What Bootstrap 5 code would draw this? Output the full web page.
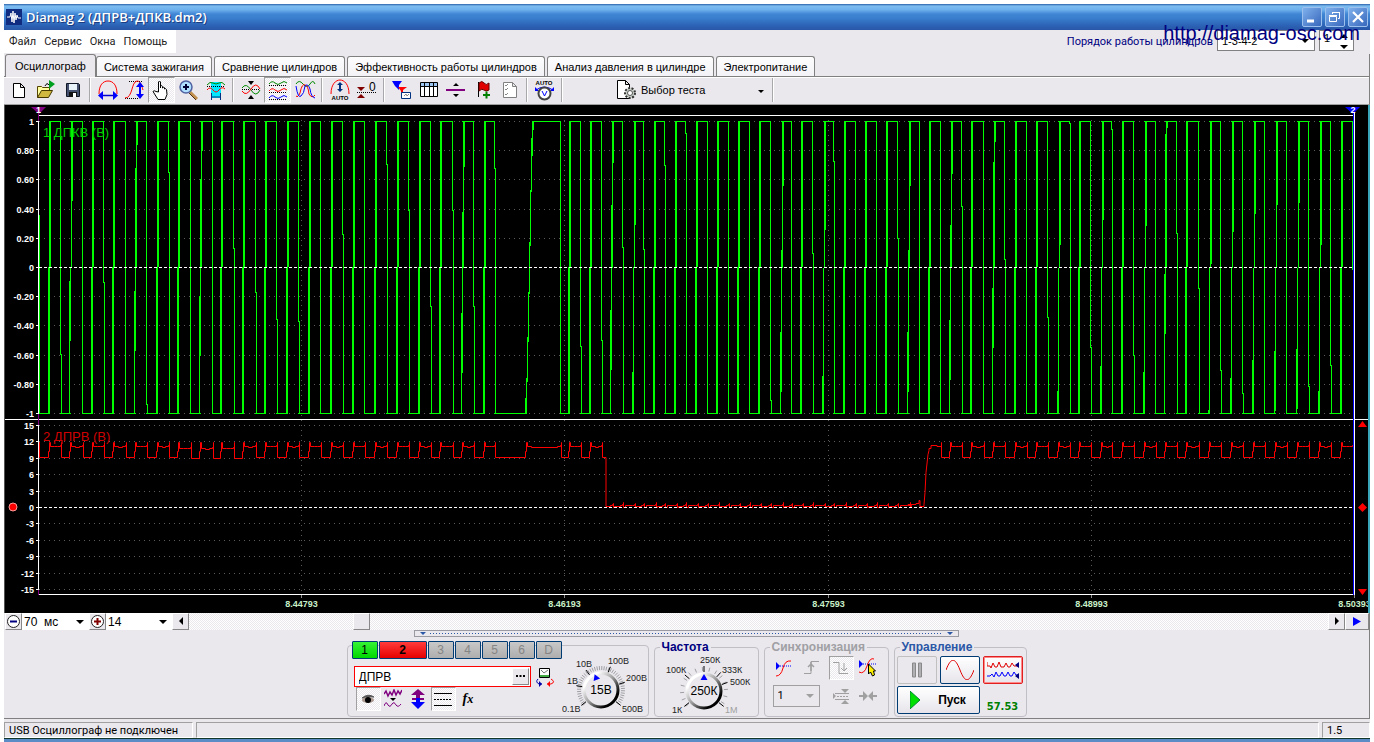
<!DOCTYPE html>
<html lang="ru">
<head>
<meta charset="utf-8">
<meta name="viewport" content="width=device-width, initial-scale=1">
<title>Diamag 2 (ДПРВ+ДПКВ.dm2)</title>
<link rel="stylesheet" href="https://cdn.jsdelivr.net/npm/bootstrap@5.3.0/dist/css/bootstrap.min.css">
<style>
:root{--face:#eae8ed;--dither:repeating-conic-gradient(#fff 0 25%,#eae8ed 0 50%) 0 0/2px 2px}
body{background:#fff;color:#000;font:11px/14px "Liberation Sans",Arial,sans-serif;padding:4px 4px 0}
.tahoma{font-family:Roboto,Tahoma,sans-serif}
svg{display:block}
.app{background:var(--face);min-height:calc(100vh - 4px);border-bottom:3px solid #5b8cc5}
.title-bar{height:26px;background:linear-gradient(#2a60a8 0,#7cbcf0 2px,#6db0ec 6px,#3f86d4 10px,#3a7fcf 14px,#2b61b4 22px,#2a57a6);padding:0 2px 0 2px}
.title-bar h1{font:600 13px/18px "Open Sans","Noto Sans",sans-serif;color:#fff;margin:0;text-shadow:1px 1px #1c3c80}
.win-btn{width:20px;height:20px;padding:0;border:1px solid #9cc0ee;border-radius:2px;background:linear-gradient(135deg,#7fb0ec,#3868bc)}
.menu-row{height:24px}
.menu-list{background:#fff;height:23px;padding:0 9px 0 5px;gap:8px}
.menu-list a{color:#222;text-decoration:none}
.order-label{color:#000080}
.field{position:relative;background:#fff}
.field select,.field input{appearance:none;border:0;background:transparent;width:100%;height:100%;padding:0 4px;font:inherit;color:#000;outline:0}
.field .arrow{position:absolute;right:5px;top:50%;margin-top:-2px;border:4px solid transparent;border-top-color:#000;border-bottom:0;pointer-events:none}
.field.framed{border:1px solid #808080;height:21px}
.order-field{width:98px}.count-field{width:35px}
.order-field input,.count-field input{padding-bottom:10px}
.field .up{border-top:0;border-bottom:4px solid #000;margin-top:-7px}
.field .down{margin-top:4px}
.site-link{position:absolute;right:10px;top:17px;font-size:20px;line-height:24px;color:#000080;text-decoration:none;z-index:3}
.tab-row{padding-left:1px;gap:2px;border-bottom:1px solid #808080;border-right:1px solid #808080;height:23px}
.tab-row button{border:1px solid #808080;border-bottom:0;border-radius:3px 3px 0 0;background:linear-gradient(#fdfdfe,#f3f2f6);height:20px;padding:0 7px;font-size:11px;line-height:18px;white-space:nowrap;text-align:center}
.tab-row button.current{height:23px;margin-bottom:-1px;margin-right:-2px;background:var(--face);padding:0 9px;line-height:20px;z-index:1}
.tool-row{height:28px;padding:0 0 1px 1px;border-right:1px solid #808080;border-bottom:1px solid #a0a0a0;box-shadow:inset 0 1px #fff}
.tool{width:27px;height:26px;border:0;background:none;padding:0;display:flex;align-items:center;justify-content:center}
.pressed{background:var(--dither);border:1px solid #fff;border-top-color:#a0a0a0;border-left-color:#a0a0a0}
.divider{width:2px;height:24px;margin:0 3px;background:#a8a8ac;border-right:1px solid #fff}
.test-pick{width:203px;padding-left:49px;position:relative;gap:4px}
.test-pick select{appearance:none;border:0;background:transparent;font:inherit;padding:0;flex:1;outline:0}
.test-pick .arrow{position:absolute;right:5px;top:50%;border:3px solid transparent;border-top-color:#000;border-bottom:0;pointer-events:none}
.scope{background:#000;border-left:1px solid #555;border-right:2px solid #38a6b8}
.scope svg{width:100%;height:508px;overflow:hidden}
.scroll-row{height:17px;padding-left:1px;border-right:1px solid #808080}
.raised{border:1px solid;border-color:#fff #888 #888 #fff;background:var(--face);padding:0;display:flex;align-items:center;justify-content:center;width:17px;height:17px}
.scroll-row .field{font-size:12px;height:17px}
.scroll-row select{padding:0 2px}
.ms-field{width:67px}.len-field{width:66px}
.track{appearance:none;flex:1;min-width:0;height:17px;margin:0;background:var(--dither)}
.track::-webkit-slider-thumb{appearance:none;width:17px;height:17px;background:var(--face);border:1px solid;border-color:#fff #888 #888 #fff}
.splitter{width:545px;height:7px;border:1px solid #9a9aa2;margin:0 auto;padding:0 5px}
.splitter i{border:3px solid transparent;border-top-color:#2a57a6;border-bottom:0}
.splitter span{flex:1;height:1px;margin:0 4px;background:repeating-linear-gradient(90deg,#2a57a6 0 1px,transparent 1px 3px)}
.panel{border-right:1px solid #808080;border-bottom:1px solid #808080;padding-bottom:1px}
.groups{gap:5px;padding-top:3px}
.box{border:1px solid #c0bfc6;border-radius:4px}
.channel-box{width:302px;height:72px;margin-top:5px}
fieldset.box{height:76px;margin-top:1px;padding:0 2px;min-width:0}
legend{float:none;width:auto;margin:0 0 0 3px;padding:0 2px;font-size:12px;line-height:13px;font-weight:bold}
.channels{margin:-5px 0 0 4px;gap:1px}
.channels button{width:26px;height:18px;border:1px solid #003c74;border-radius:1px;background:linear-gradient(#c8c8c8,#aeaeae);color:#858585;padding:0;font-size:12px;line-height:14px}
.channels .one{background:linear-gradient(#36f336,#00d800);color:#000}
.channels .two{width:48px;background:linear-gradient(#ff3b3b,#e60000);color:#000;font-weight:bold}
.name-row{margin-top:7px;padding-left:6px;gap:4px}
.name-field{border:1px solid #f00;background:#fff;width:177px;height:21px;padding:1px}
.name-field input{border:0;flex:1;min-width:0;padding:0 3px;font-size:12px;outline:0}
.mini{width:25px;height:24px;border:0;background:none;padding:0;display:flex;align-items:center;justify-content:center}
.mini.pressed{border:1px solid #fff;border-top-color:#a0a0a0;border-left-color:#a0a0a0;background:var(--dither)}
.fx{font:italic bold 14px/16px "Liberation Serif",serif}
.freq-box{width:105px}.sync-box{width:125px}.ctl-box{width:133px}
.sync-grid{display:grid;grid-template-columns:25px 29px 29px 25px;justify-items:center;align-items:center;padding:2px 0 0 6px;row-gap:4px}
.sync-grid .field{grid-column:1/3;width:47px;height:22px;border:1px solid #a0a0a0;background:var(--face);justify-self:start}
.ctl-grid{display:grid;grid-template-columns:40px 40px 40px;gap:2px 3px;padding-top:2px}
.push{height:28px;padding:0;border:1px solid #003c74;border-radius:2px;background:linear-gradient(#fff,#e6e4ea);display:flex;align-items:center;justify-content:center}
.push.off{border-color:#c0c0c0;background:#eae8ed}
.push.on{border:1px solid #e02020;box-shadow:inset 0 0 0 1px #f88}
.push.start{grid-column:1/3;font:bold 12px/14px "Liberation Sans",sans-serif;gap:18px}
.rate{font:bold 11px/14px "DejaVu Sans Condensed",sans-serif;color:#008000;align-self:end;text-align:center}
.status-row{height:20px;padding-top:3px;gap:3px;border-bottom:1px solid #12352c;margin-top:auto}
.status-row div{border:1px solid #a0a0a0;border-right-color:#fff;border-bottom-color:#fff;padding:0 4px;height:16px;line-height:15px}
.conn{width:189px;white-space:nowrap}.ver{width:48px}
</style>
</head>
<body>
<div class="app d-flex flex-column position-relative">
  <header class="title-bar d-flex align-items-center justify-content-between">
    <div class="d-flex align-items-center gap-1">
      <svg width="16" height="16"><rect width="16" height="16" fill="#102c80"/><path d="M1 8h3l1-4 1 9 1-11 1 12 1-10 1 7 1-5 1 3h3" fill="none" stroke="#fff"/></svg>
      <h1>Diamag 2 (ДПРВ+ДПКВ.dm2)</h1>
    </div>
    <div class="d-flex" style="gap:3px">
      <button class="win-btn" aria-label="Свернуть"><svg width="18" height="18"><path d="M4 13h7" stroke="#fff" stroke-width="3"/></svg></button>
      <button class="win-btn" aria-label="Восстановить"><svg width="18" height="18" fill="none" stroke="#fff"><path d="M6.500 6V4.500h7v6H12M6 4.500h8M3.500 8.500h7v5h-7zM3 7.500h8"/></svg></button>
      <button class="win-btn" aria-label="Закрыть"><svg width="18" height="18"><path d="M4 4l10 10M14 4L4 14" stroke="#fff" stroke-width="2.200"/></svg></button>
    </div>
  </header>
  <a class="site-link" href="http://diamag-osc.com">http://diamag-osc.com</a>

  <div class="menu-row d-flex justify-content-between">
    <nav class="menu-list tahoma d-flex align-items-center"><a href="#">Файл</a><a href="#">Сервис</a><a href="#">Окна</a><a href="#">Помощь</a></nav>
    <div class="d-flex align-items-center pe-3">
      <label class="order-label me-1 tahoma" for="order">Порядок работы цилиндров</label>
      <div class="field framed order-field align-self-start"><select id="order"><option>1-3-4-2</option></select><span class="arrow"></span></div>
      <div class="field framed count-field ms-1 align-self-start"><input id="cyl" type="text" value="1" aria-label="Цилиндр"><span class="arrow up"></span><span class="arrow down"></span></div>
    </div>
  </div>

  <div class="tab-row d-flex align-items-end" role="tablist">
    <button class="current" role="tab">Осциллограф</button><button role="tab">Система зажигания</button><button role="tab">Сравнение цилиндров</button><button role="tab">Эффективность работы цилиндров</button><button role="tab">Анализ давления в цилиндре</button><button role="tab">Электропитание</button>
  </div>

  <div class="tool-row d-flex align-items-center">
    <button class="tool" aria-label="Новый"><svg width="24" height="22"><path d="M6.500 4.500h7l4 4v10h-11zM13.500 4.500v4h4" fill="#fff" stroke="#000"/></svg></button>
    <button class="tool" aria-label="Открыть"><svg width="24" height="22"><path d="M3.500 18.500v-11h4l1 1h7v3" fill="#ffffa0" stroke="#554400"/><path d="M3.500 18.500l4-7h11l-4 7z" fill="#d0b840" stroke="#443800"/><path d="M11 7q2-4 4-1" fill="none" stroke="#000"/><path d="M15 1l6 4-6 5z" fill="#00a020"/></svg></button>
    <button class="tool" aria-label="Сохранить"><svg width="24" height="22"><path d="M5.500 4.500h12l1 1v12h-13z" fill="#44506e" stroke="#101828"/><path d="M8 5h8v6H8z" fill="#e8f4fa"/><path d="M8 13h8v5H8z" fill="#111"/><path d="M12 14h3v4h-3z" fill="#fff"/></svg></button>
    <span class="divider"></span>
    <button class="tool" aria-label="Период"><svg width="24" height="22" fill="none"><path d="M3 15C3 6 7 2 12 2s9 4 9 13" stroke="#f00"/><path d="M4 16.500h16" stroke="#00c" stroke-width="1.500"/><path d="M7 12l-5 4.500L7 21zM17 12l5 4.500L17 21z" fill="#00f"/></svg></button>
    <button class="tool" aria-label="Амплитуда"><svg width="24" height="22" fill="none"><path d="M6 2.500h14M2 19.500h13" stroke="#000" stroke-dasharray="1 1"/><path d="M2 19c8 0 6-16 12-17 4 0 5 6 6 9" stroke="#f00"/><path d="M17 5v13" stroke="#00f" stroke-width="2"/><path d="M13 8l4-5 4 5zM13 15l4 5 4-5z" fill="#00f"/></svg></button>
    <button class="tool pressed" aria-label="Рука"><svg width="24" height="22"><path d="M8.500 13V3q1-2 2 0v6V7q1.500-1 2 .5V9q1.500-2 2 0v1q1.500-1 2 .5l.5 5-2 5h-7l-5-8q1-1.500 3 0z" fill="#fff" stroke="#000"/></svg></button>
    <button class="tool" aria-label="Лупа"><svg width="24" height="22"><path d="M13 13l7 7" stroke="#c09050" stroke-width="3"/><path d="M12 14l7 7" stroke="#503010"/><circle cx="9" cy="8" r="6" fill="#b0e0ff" stroke="#5060a0" stroke-width="1.500"/><path d="M6 8h6M9 5v6" stroke="#003" stroke-width="2"/></svg></button>
    <button class="tool" aria-label="Выделение"><svg width="24" height="22" fill="none"><path d="M7 3h10v16H7z" fill="#00e8ff"/><path d="M3 6q3-4 6-2t6 0 6 2" stroke="#080"/><path d="M3 7.500h18" stroke="#000" stroke-dasharray="1 1"/><path d="M3 11q3-4 6 0t6 0 6-1" stroke="#f00"/><path d="M7.500 14v7M16.500 14v7M8 18h8" stroke="#003080"/></svg></button>
    <span class="divider"></span>
    <button class="tool" aria-label="Совместить"><svg width="24" height="22" fill="none"><path d="M12 6L9 2h6zM12 16l-3 4h6z" fill="#000"/><path d="M3 10.500h18" stroke="#000" stroke-dasharray="1 1"/><path d="M3 9q4-6 9 2t9 0" stroke="#080"/><path d="M3 12q4 6 9-2t9 0" stroke="#f00"/></svg></button>
    <button class="tool pressed" aria-label="Раздельно"><svg width="24" height="22" fill="none"><path d="M3 5q3-4 6-1t6 0 6 0" stroke="#080"/><path d="M3 6.500h18M3 13.500h18M3 20.500h18" stroke="#000" stroke-dasharray="1 1"/><path d="M3 12q3-4 6-1t6 0 6 0" stroke="#f00"/><path d="M3 19q3-4 6-1t6 0 6 0" stroke="#00f"/></svg></button>
    <button class="tool" aria-label="Наложить"><svg width="24" height="22" fill="none"><path d="M3 5q3-5 7 0t7 0 5 0" stroke="#080"/><path d="M3 17q2 2 4-3 2-10 5-8 3 0 4 9 3 5 6 1" stroke="#f00"/><path d="M3 7q2 13 5 10 3-2 4-10 3-3 5 3 1 8 5 9" stroke="#00f"/></svg></button>
    <span class="divider"></span>
    <button class="tool" aria-label="Авто"><svg width="24" height="22"><path d="M3 15C3 5 8 1 12 1s9 4 9 14" fill="none" stroke="#f00"/><path d="M12 4v8" stroke="#003080" stroke-width="2"/><path d="M9 6l3-3 3 3zM9 10l3 3 3-3z" fill="#003080"/><text x="12" y="21" font-size="6" font-weight="bold" text-anchor="middle">AUTO</text></svg></button>
    <button class="tool" aria-label="Ноль"><svg width="24" height="22"><path d="M2 8h8l-4 4zM2 19h8l-4-4z" fill="#800000"/><path d="M2 13.500h19" stroke="#000" stroke-dasharray="1 1"/><text x="14" y="12" font-size="12">0</text></svg></button>
    <span class="divider"></span>
    <button class="tool" aria-label="Фильтр"><svg width="24" height="22"><path d="M2 2h10L9 6v5L5 7z" fill="#00f"/><path d="M8 8h9l-4 3v5h-2v-4z" fill="#f00"/><path d="M11.500 13.500h9v6h-9z" fill="#fff" stroke="#003080"/><path d="M14 17l2-2 1 2 2-2" stroke="#888" fill="none"/></svg></button>
    <button class="tool" aria-label="Таблица"><svg width="24" height="22"><path d="M3.500 3.500h17v14h-17z" fill="#fff" stroke="#000"/><path d="M4 4h16v3H4z" fill="#9cc4f0"/><path d="M3 7.500h18M7.500 4v13M12.500 4v13M16.500 4v13" stroke="#000" fill="none"/></svg></button>
    <button class="tool" aria-label="Разделить"><svg width="24" height="22"><path d="M2 11h19" stroke="#800080" stroke-width="2"/><path d="M9 7l3-3 3 3zM9 15l3 3 3-3z"/></svg></button>
    <button class="tool" aria-label="Метка"><svg width="24" height="22"><path d="M7.500 3v15" stroke="#000"/><path d="M8 4q3-3 5 0t5 0v7q-3 2-5 0t-5 1z" fill="#e00000" stroke="#600"/><path d="M12 16h7M15.500 12.500v7" stroke="#008000" stroke-width="2"/></svg></button>
    <button class="tool" aria-label="Отчёт"><svg width="24" height="22" fill="none"><path d="M5.500 3.500h9l4 4v11h-13zM14.500 3.500v4h4" fill="#fff" stroke="#808080"/><path d="M7 6l1 1 2-2M7 10l1 1 2-2M7 15l1 1 2-2" stroke="#888"/></svg></button>
    <span class="divider"></span>
    <button class="tool" aria-label="Автовольтметр"><svg width="24" height="22"><text x="11" y="6" font-size="6" font-weight="bold" text-anchor="middle">AUTO</text><path d="M3 11q8-6 17 0" fill="none" stroke="#00f"/><path d="M2 8v4h4zM21 8v4h-4z" fill="#00f"/><circle cx="11.500" cy="14.500" r="6" fill="#fff" stroke="#444" stroke-width="2"/><path d="M9 12l2.500 5 2.500-5" fill="none" stroke="#00f"/></svg></button>
    <span class="divider"></span>
    <div class="test-pick d-flex align-items-center">
      <svg width="22" height="22"><path d="M2.500 1.500h8l4 4v14h-12zM10.500 1.500v4h4" fill="#fff" stroke="#000"/><circle cx="15" cy="14" r="5" fill="#c8d0c8" stroke="#333" stroke-width="2" stroke-dasharray="2 1.500"/><circle cx="15" cy="14" r="2.500" fill="#fff" stroke="#555"/></svg>
      <select aria-label="Выбор теста"><option>Выбор теста</option></select><span class="arrow"></span>
    </div>
    <span class="divider"></span>
  </div>

  <main class="scope"><svg id="scope" font-family="Liberation Sans,Arial,sans-serif"></svg></main>

  <div class="scroll-row d-flex">
    <button class="raised" aria-label="Меньше"><svg width="15" height="15"><circle cx="7.500" cy="7.500" r="6" fill="#fff" stroke="#222"/><path d="M4 7.500h7" stroke="#000080" stroke-width="2"/></svg></button>
    <div class="field ms-field"><select aria-label="Развёртка"><option>70 &nbsp;мс</option></select><span class="arrow"></span></div>
    <button class="raised" aria-label="Больше"><svg width="15" height="15"><circle cx="7.500" cy="7.500" r="6" fill="#fff" stroke="#222"/><path d="M4 7.500h7M7.500 4v7" stroke="#800000" stroke-width="2"/></svg></button>
    <div class="field len-field"><select aria-label="Масштаб"><option>14</option></select><span class="arrow"></span></div>
    <button class="raised" aria-label="Влево"><svg width="8" height="9"><path d="M6 0v8L2 4z"/></svg></button>
    <input class="track" type="range" min="0" max="1000" value="146" aria-label="Прокрутка">
    <button class="raised" aria-label="Вправо"><svg width="8" height="9"><path d="M2 0v8l4-4z"/></svg></button>
    <button class="raised" style="width:24px" aria-label="Воспроизвести"><svg width="10" height="9"><path d="M1 0v9l8-4.500z" fill="#00f"/></svg></button>
  </div>

  <section class="panel flex-grow-1">
    <div class="splitter d-flex align-items-center"><i></i><span></span><i></i></div>
    <div class="groups d-flex justify-content-center align-items-start">
      <div class="box channel-box d-flex">
        <div>
          <div class="channels d-flex"><button class="one">1</button><button class="two">2</button><button>3</button><button>4</button><button>5</button><button>6</button><button>D</button></div>
          <div class="name-row d-flex align-items-center">
            <div class="name-field d-flex"><input type="text" value="ДПРВ" aria-label="Имя канала"><button class="raised" aria-label="Выбрать"><svg width="9" height="3"><path d="M0 1h2M3.500 1h2M7 1h2" stroke="#000" stroke-width="2"/></svg></button></div>
            <svg width="20" height="20" fill="none"><path d="M4.500 1.500h10v9h-10z" fill="#fff" stroke="#000"/><path d="M5 8h9v2H5z" fill="#4a4"/><path d="M6 3l3 3 4-3" stroke="#777"/><path d="M3 12q-3 3 1 5h3" stroke="#00a"/><path d="M16 12q5 3 0 5h-4" stroke="#f00"/><path d="M4 14l3 3-3 3z" fill="#00a"/><path d="M15 14l-3 3 3 3z" fill="#f00"/></svg>
          </div>
          <div class="d-flex ps-2">
            <button class="mini pressed" aria-label="Показать"><svg width="16" height="12"><path d="M2 5q6-5 12-1-4-1-12 1z" fill="#555" stroke="#555"/><ellipse cx="8" cy="7" rx="6" ry="3" fill="#a89890"/><circle cx="8" cy="7" r="3"/></svg></button>
            <button class="mini" aria-label="Сглаживание"><svg width="18" height="20" fill="none" stroke="#800080"><path d="M0 5l2-3 2 5 2-4 2 3 2-5 2 5 2-4 2 3 2-4" stroke-width="1.500"/><path d="M0 17q2-6 4-1 2 3 4-1 2-3 4 1 2 3 5-1"/><path d="M6 9h6l-3 3z" fill="#000" stroke="none"/></svg></button>
            <button class="mini" aria-label="Сдвиг"><svg width="16" height="20"><path d="M8 0l7 6h-5v3h4v2H2V9h4V6H1z" fill="#800080"/><path d="M8 20l7-7h-5v-4H6v4H1z" fill="#00f"/></svg></button>
            <button class="mini pressed" aria-label="Линии"><svg width="18" height="16"><path d="M0 2.500h18M0 14.500h18" stroke="#000"/><path d="M0 8.500h18" stroke="#000" stroke-dasharray="2 1"/></svg></button>
            <button class="mini fx" aria-label="Функция">f<small>x</small></button>
          </div>
        </div>
        <svg id="volts" class="flex-shrink-0" width="88" height="70" font-family="Liberation Sans,Arial,sans-serif"></svg>
      </div>
      <fieldset class="box freq-box"><legend style="color:#000080">Частота</legend><svg id="freq" width="98" height="62" font-family="Liberation Sans,Arial,sans-serif"></svg></fieldset>
      <fieldset class="box sync-box"><legend style="color:#a0a0a4">Синхронизация</legend>
        <div class="sync-grid">
          <button class="mini" aria-label="Уровень"><svg width="20" height="18"><path d="M1 7h16" stroke="#00f" stroke-dasharray="1 1"/><path d="M1 17q5 0 7-8t8-7" fill="none" stroke="#f00"/><path d="M1 3v8l4-4z" fill="#00f"/></svg></button>
          <button class="mini" aria-label="Фронт"><svg width="20" height="16" fill="none" stroke="#a0a0a0"><path d="M2 13.500h7v-12h8"/><path d="M9 2v9M6 7l3-3 3 3" stroke-width="1.500"/></svg></button>
          <button class="mini pressed" aria-label="Спад"><svg width="20" height="16" fill="none" stroke="#a0a0a0"><path d="M2 2.500h6v11h9M13 3v8M10 8l3 3 3-3"/></svg></button>
          <button class="mini" aria-label="Выбрать уровень"><svg width="20" height="20"><path d="M1 6h18" stroke="#00f" stroke-dasharray="1 1"/><path d="M1 14q5 3 8-6t7-7" fill="none" stroke="#f00"/><path d="M1 2v8l4-4z" fill="#00f"/><path d="M10.500 6v10l2-2 2 4 2-1-1-4h2z" fill="#fff000" stroke="#000"/></svg></button>
          <div class="field tahoma"><select aria-label="Канал"><option>1</option></select><span class="arrow" style="border-top-color:#a0a0a0"></span></div>
          <button class="mini" aria-label="Диапазон"><svg width="18" height="17"><path d="M1 5v6l3-3zM9 1h8l-4 4zM13 12l-4 4h8z" fill="#a0a0a0"/><path d="M3 5.500h14M3 11.500h14" stroke="#a0a0a0"/><path d="M5 8.500h12" stroke="#a0a0a0" stroke-dasharray="2 1"/></svg></button>
          <button class="mini" aria-label="К центру"><svg width="18" height="10"><path d="M0 5h6M12 5h6" stroke="#a0a0a0" stroke-width="2"/><path d="M4 0v10l5-5zM14 0v10L9 5z" fill="#a0a0a0"/></svg></button>
        </div>
      </fieldset>
      <fieldset class="box ctl-box"><legend style="color:#2a57a6">Управление</legend>
        <div class="ctl-grid">
          <button class="push off" aria-label="Пауза"><svg width="12" height="16"><path d="M1.500 1h3v14h-3zM7.500 1h3v14h-3z" fill="#b0b0b4" stroke="#888"/></svg></button>
          <button class="push" aria-label="Осциллограмма"><svg width="28" height="20"><path d="M0 10C5-3 9-3 14 10s9 13 14 0" fill="none" stroke="#e00000"/></svg></button>
          <button class="push on" aria-label="Запись"><svg width="32" height="20" fill="none"><path d="M0 2v4h3l1 2 2-5 2 4 2 0 2-5 2 5h3l2-4 2 4h2l2-4 2 3h4" stroke="#e00000"/><path d="M0 16h3l2-2 2 3 2-5 2 4 2 0 2-4 2 4h2l2-4 2 4h2l2-4 2 3h4" stroke="#00f"/><path d="M32 2v6l-4-3zM32 13v6l-4-3z" fill="#000080"/></svg></button>
          <button class="push start"><svg width="10" height="18"><path d="M0 0v18l10-9z" fill="#00e000" stroke="#083"/></svg>Пуск</button>
          <output class="rate">57.53</output>
        </div>
      </fieldset>
    </div>
  </section>

  <footer class="status-row d-flex tahoma"><div class="conn">USB Осциллограф не подключен</div><div class="flex-grow-1"></div><div class="ver">1.5</div></footer>
</div>

<script src="https://cdn.jsdelivr.net/npm/bootstrap@5.3.0/dist/js/bootstrap.bundle.min.js"></script>
<script>
// Time positions of the tooth edges, in sweep units (0..1315)
const rise = [12,33,55,76,98,120,141,163,184,206,228,250,272,294,316,338,360,382,403,425,447,null,
  532,553,574,596,617,638,659,680,701,722,744,764,786,807,828,849,871,892,913,934,956,978,999,1021,1042,1064,1085,1107,1128,1149,1172,1194,1216,1238,1260,1282,1304];
const fall = [22,44,65,87,108,130,152,174,195,217,238,260,282,304,326,348,370,392,414,435,456,522,
  542,563,584,605,626,647,669,690,711,732,753,774,795,817,838,859,881,902,923,945,966,988,1009,1031,1052,1073,1095,1117,1138,1160,1182,1204,1226,1248,1270,1292,1314];
// Sloped rising edges: bottom, middle and top break levels
const slope = {33:[176,162,96],98:[186,63,40],163:[191,74,46],425:[208,107,62],574:[205,100,58],596:[267,162,120],744:[227,145,81],786:[271,163,125],
  871:[227,145,81],913:[215,120,69],956:[183,57,37],1021:[286,163,140],1064:[261,163,115],1107:[267,163,121],1128:[169,29,23],1172:[305,163,159],1194:[273,163,127],1216:[255,163,109],1238:[246,163,100],1260:[244,163,98],1282:[286,163,140]};
// Falling edges that step one sample to the right, with the step level
const step = {22:250,65:178,108:300,130:68,195:144,217:188,238:215,260:217,304:130,348:60,370:106,392:202,414:106,435:202,456:64,542:242,563:236,584:143,605:145,626:61,647:29,732:296,774:149,795:57,859:134,
  923:102,966:155,1009:213,1031:19,1052:243,1073:25,1095:251,1138:129,1160:184,1182:266,1204:289,1270:282,1292:261};

function drawScope() {
  const svg = document.getElementById('scope'), W = svg.clientWidth, L = 34, R = W - 14, k = (R - L) / 1315;
  const G = v => Math.round(L + v * k);
  const X = v => G(v) - 1;
  const box = (x, a, b) => `M${x} ${a}h1v${b - a}h-1z`;
  let o = '', g = '';
  const line = (x1, y1, x2, y2, c, d) => o += `<path d="M${x1} ${y1}L${x2} ${y2}" stroke="${c}"${d ? ` stroke-dasharray="${d}"` : ''}/>`;
  const label = (x, y, t, c, a) => o += `<text x="${x}" y="${y}" fill="${c}" font-size="9" font-weight="bold" text-anchor="${a}">${t}</text>`;
  const levels1 = ['1','0.80','0.60','0.40','0.20','0','-0.20','-0.40','-0.60','-0.80','-1'];
  const levels2 = ['15','12','9','6','3','0','-3','-6','-9','-12','-15'];
  const level = (t, y, i) => { if (i != 5) line(L, y, R, y, '#5a5a5a', '1 4'); line(L - 3, y, L, y, '#fff'); label(L - 5, y + 3, t, '#fff', 'end'); };
  levels1.forEach((t, i) => level(t, 16.5 + Math.round(i * 29.2), i));
  levels2.forEach((t, i) => level(t, 320.5 + Math.round(i * 16.4), i));
  ['8.44793','8.46193','8.47593','8.48993','8.50393'].forEach((t, i) => { const x = G((i + 1) * 263.2 - 1) + .5;
    if (i < 4) line(x, 15, x, 489, '#5a5a5a', '1 4'); line(x, 490, x, 493, '#888'); label(x, 502, t, '#c8f0c8', 'middle'); });

  // Crankshaft sensor: square wave between y=16 and y=308
  g += box(X(1), 110, 309) + `M${X(1)} 308H${X(11)}v1H${X(1)}z`;
  rise.forEach((r, i) => {
    const f = X(fall[i]);
    let x;
    if (r === null) {
      x = X(495);
      [[293,309],[273,309],[232,277],[187,237],[137,189],[85,141],[33,87],[16,51],[16,25]].forEach((s, j) => g += box(X(487) + j, s[0], s[1]));
    } else {
      x = X(r);
      const s = slope[r];
      if (s) g += box(x - 2, s[0], 309) + box(x - 1, s[1], Math.min(309, s[0] + 60)) + box(x, 16, 163) + box(x + 1, 16, s[2]);
      else g += box(x - 2, 162, 309) + box(x - 1, 16, 309) + box(x, 16, 162);
    }
    g += `M${x - 1} 16H${f + 1}v1H${x - 1}z`;
    if (i == fall.length - 1) { g += box(f, 16, 165); return; }
    const st = step[fall[i]];
    if (st) g += box(f, 16, st) + box(f + 1, st - 1, 309); else g += box(f, 16, 309);
    const next = rise[i + 1] === null ? 487 : rise[i + 1];
    g += `M${f} 308H${X(next)}v1H${f}z`;
  });
  o += `<path d="${g}" fill="#0f0"/>`;

  // Camshaft sensor: same tooth rhythm at 12 V, with a long drop to zero
  let p = `M${L + .5} 337V352.5`;
  rise.forEach((r, i) => {
    const f = X(fall[i]) + 1.5, sag = r > 130 && r < 195;
    if (r > 553 && r < 892) return;
    const x = r === null ? X(487) + .5 : X(r) - 1.5;
    const hi = sag ? 343.5 : 341.5, lo = sag ? 353.5 : 352.5;
    if (r == 892) p += `H${X(886)}V399.5l1-12 1-20 2-18 1-4V343.5h2V340.5h6V341.5H${f}V337.5`;
    else p += `H${x}V346.500h1V337.500h1V${hi}H${x + 6}v${i % 2}H${f - 4}V${hi}H${f - 1}v-1h1V337.500`;
    if (i == rise.length - 1) return;
    p += `V${lo}`;
    if (r == 553) {
      p += `H${X(568)}V401.5`;
      fall.concat(rise).filter(v => v !== null && v > 572 && v < 876).sort((a, b) => a - b).forEach((v, j) => {
        const e = X(v) + 1.5;
        p += `H${e - 3}V400.5h2V399.5h1V${j % 3 == 1 ? 397.5 : 398.5}V402.5${j % 2 ? 'h2V400.5' : 'h1V401.5'}`;
      });
      p += `V400.5H${X(870)}V399.5H${X(878)}V398.5H${X(881)}V395.5h1V401.5`;
    }
  });
  o += `<path d="${p}" fill="none" stroke="#f00"/>`;
  line(L, 162.5, R, 162.5, '#fff', '3 2'); line(L, 402.5, R, 402.5, '#fff', '3 2');

  line(L - .5, 10, L - .5, 490, '#fff'); line(L, 10.5, R, 10.5, '#fff'); line(0, 314.5, W, 314.5, '#fff'); line(L, 489.5, R, 489.5, '#fff');
  line(L - .5, 8, L - .5, 16, '#800080'); line(L - .5, 309, L - .5, 320, '#800080'); line(L - .5, 485, L - .5, 490, '#800080');
  line(R - .5, 8, R - .5, 490, '#00f'); line(R + .5, 8, R + .5, 490, '#fff');
  o += `<path d="M${L - 8} 2h15l-7 7z" fill="#800080"/><path d="M${R - 9} 2h15l-7 7z" fill="#00f"/>`;
  label(L - .5, 8, '1', '#fff', 'middle'); label(R - 1, 8, '2', '#fff', 'middle');
  o += `<text x="${L + 4}" y="32" fill="#00d000" font-size="13">1 ДПКВ (В)</text><text x="${L + 4}" y="336" fill="#d00000" font-size="13">2 ДПРВ (В)</text>`;
  o += `<circle cx="8" cy="402" r="4" fill="#f00" stroke="#f99"/><path d="M${R + 4} 322h9l-4.500-6zM${R + 4} 402.500l4.500-4.500 4.500 4.500-4.500 4.500zM${R + 4} 484h9l-4.500 6z" fill="#f00"/>`;
  svg.innerHTML = o;
}

function drawKnob(id, cx, cy, value, angle, marks, tick) {
  let o = '<defs><linearGradient id="' + id + 'g" x1="0" y1="0" x2="1" y2="1"><stop offset=".2" stop-color="#fff"/><stop offset=".5" stop-color="#999"/><stop offset=".8" stop-color="#000"/></linearGradient></defs>';
  const ray = (a, r1, r2, c) => { const t = a * Math.PI / 180, s = Math.sin(t), q = -Math.cos(t);
    o += `<path d="M${cx + s * r1} ${cy + q * r1}L${cx + s * r2} ${cy + q * r2}" stroke="${c}"/>`; };
  for (let a = -130; a <= 130; a += tick) ray(a, 20, 24, '#a0a0a4');
  marks.forEach(m => { ray(m[3], 19, 25, '#000'); o += `<text x="${m[1]}" y="${m[2]}" font-size="9" fill="${m[4] || '#222'}">${m[0]}</text>`; });
  o += `<circle cx="${cx}" cy="${cy}" r="17" fill="#eae8ed" stroke="url(#${id}g)" stroke-width="3"/>`;
  o += `<path transform="rotate(${angle} ${cx} ${cy})" d="M${cx - 3.5} ${cy - 11}h7l-3.5-6z" fill="#00f"/>`;
  o += `<text x="${cx}" y="${cy + 4}" font-size="12" text-anchor="middle">${value}</text>`;
  document.getElementById(id).innerHTML = o;
}

drawScope();
addEventListener('resize', drawScope);
drawKnob('volts', 39, 44, '15В', -22, [['0.1В',0,66,-128],['1В',5,38,-80],['10В',14,21,-37],['100В',46,18,22],['200В',64,35,72],['500В',60,66,128]], 6);
drawKnob('freq', 47, 37, '250К', 0, [['1К',15,59,-128],['100К',9,19,-50],['250К',43,9,0],['333К',65,19,42],['500К',73,31,70],['1М',68,59,128,'#a0a0a0']], 18);
</script>
</body>
</html>
